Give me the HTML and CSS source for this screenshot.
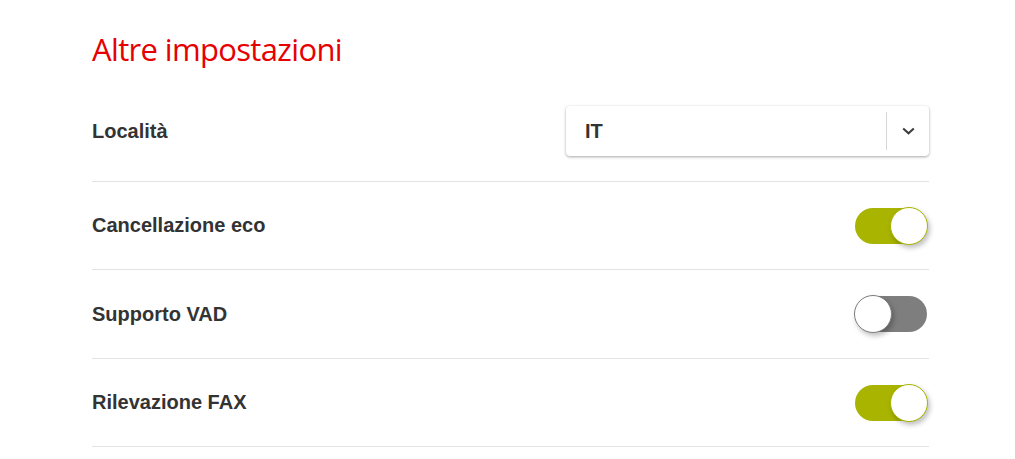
FILE: index.html
```html
<!DOCTYPE html>
<html lang="it">
<head>
<meta charset="utf-8">
<title>Altre impostazioni</title>
<link rel="stylesheet" href="styles.css">
</head>
<body>
<main class="page">
  <h1 class="title">Altre impostazioni</h1>
  <div class="row row-select">
    <span class="label">Località</span>
    <div class="select">
      <span class="select-value">IT</span>
      <span class="select-arrow">
        <svg width="13" height="8" viewBox="0 0 13 8"><path d="M1.2 1.5 L6.5 6.3 L11.8 1.5" fill="none" stroke="#3c3c3c" stroke-width="2"/></svg>
      </span>
    </div>
  </div>
  <div class="row">
    <span class="label">Cancellazione eco</span>
    <span class="toggle on"><span class="knob"></span></span>
  </div>
  <div class="row row-mid">
    <span class="label">Supporto VAD</span>
    <span class="toggle off"><span class="knob"></span></span>
  </div>
  <div class="row">
    <span class="label">Rilevazione FAX</span>
    <span class="toggle on"><span class="knob"></span></span>
  </div>
</main>
</body>
</html>
```

FILE: styles.css
```css
html, body {
  margin: 0;
  padding: 0;
  background: #ffffff;
}

.page {
  width: 837px;
  padding: 33px 0 0 92px;
  font-family: "Liberation Sans", Arial, sans-serif;
  color: #333333;
}

.title {
  margin: 0 0 16px 0;
  font-family: "Open Sans", sans-serif;
  font-weight: 400;
  font-size: 31px;
  line-height: 32px;
  letter-spacing: -0.65px;
  color: #e60000;
}

.row {
  display: flex;
  align-items: center;
  justify-content: space-between;
  height: 87px;
  border-bottom: 1px solid #e3e3e3;
}

.row-select {
  height: 100px;
}

.row-mid {
  height: 88px;
}

.label {
  font-size: 20px;
  font-weight: 700;
  color: #333333;
}

.select {
  display: flex;
  align-items: center;
  width: 363px;
  height: 50px;
  border-radius: 4px;
  background: #ffffff;
  box-shadow: 0 1px 3px rgba(0, 0, 0, 0.35);
}

.select-value {
  flex: 1;
  padding-left: 19px;
  font-size: 20px;
  font-weight: 700;
  color: #333333;
}

.select-arrow {
  display: flex;
  align-items: center;
  justify-content: center;
  width: 42px;
  height: 38px;
  border-left: 1px solid #d6d6d6;
}

.toggle {
  position: relative;
  display: block;
  width: 72px;
  height: 36px;
  margin-right: 2px;
  border-radius: 18px;
}

.toggle.on {
  background: #a8b400;
}

.toggle.off {
  background: #7e7e7e;
}

.knob {
  position: absolute;
  top: -1px;
  width: 36px;
  height: 36px;
  border-radius: 50%;
  background: #ffffff;
  box-shadow: 2px 3px 5px rgba(0, 0, 0, 0.25);
}

.toggle.on .knob {
  right: -1px;
  border: 1px solid #a8b400;
}

.toggle.off .knob {
  left: -1px;
  border: 1px solid #7e7e7e;
}
```
